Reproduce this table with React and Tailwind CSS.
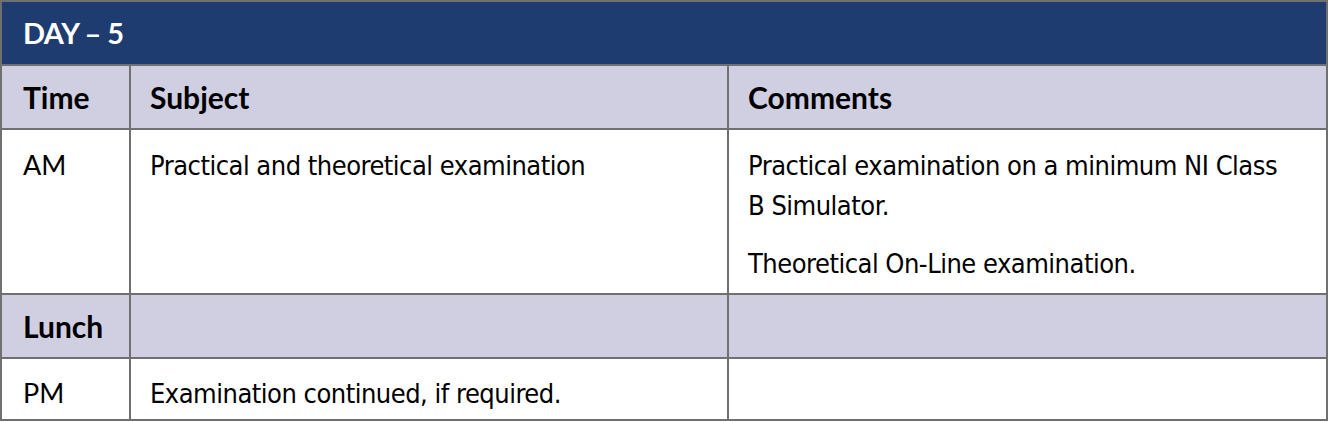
export default function App() {
  const body = "font-['DejaVu_Sans_Condensed',sans-serif] text-[27px] leading-[40px] tracking-[-0.5px] text-black";
  const head = "font-['Lato',sans-serif] font-bold text-[30px] text-black";
  const time = "font-['Lato',sans-serif] text-[27px] leading-[40px] text-black";
  return (
    <div className="w-[1330px] h-[422px] bg-white">
      <div className="grid grid-cols-[127px_596px_597px] grid-rows-[62px_62px_163px_62px_60px] gap-[2px] p-[2px] bg-[#707070] w-[1328px]">
        {/* Day title */}
        <div className="col-span-3 bg-[#1f3c70] flex items-center pl-[21px] font-['Lato',sans-serif] font-bold text-[29px] tracking-[-0.6px] text-white">
          DAY – 5
        </div>

        {/* Header row */}
        <div className={`bg-[#d0cfe1] flex items-center pl-[21px] ${head}`}>Time</div>
        <div className={`bg-[#d0cfe1] flex items-center pl-[19px] ${head}`}>Subject</div>
        <div className={`bg-[#d0cfe1] flex items-center pl-[19px] ${head}`}>Comments</div>

        {/* AM */}
        <div className={`bg-white pl-[21px] pt-[15px] ${time}`}>AM</div>
        <div className={`bg-white pl-[19px] pt-[16px] ${body}`}>Practical and theoretical examination</div>
        <div className={`bg-white pl-[19px] pr-[38px] pt-[16px] ${body}`}>
          <p>Practical examination on a minimum NI Class B Simulator.</p>
          <p className="mt-[18px]">Theoretical On-Line examination.</p>
        </div>

        {/* Lunch */}
        <div className={`bg-[#d0cfe1] flex items-center pl-[21px] ${head}`}>Lunch</div>
        <div className="bg-[#d0cfe1]"></div>
        <div className="bg-[#d0cfe1]"></div>

        {/* PM */}
        <div className={`bg-white pl-[21px] pt-[14px] ${time}`}>PM</div>
        <div className={`bg-white pl-[19px] pt-[15px] ${body}`}>Examination continued, if required.</div>
        <div className="bg-white"></div>
      </div>
    </div>
  );
}
